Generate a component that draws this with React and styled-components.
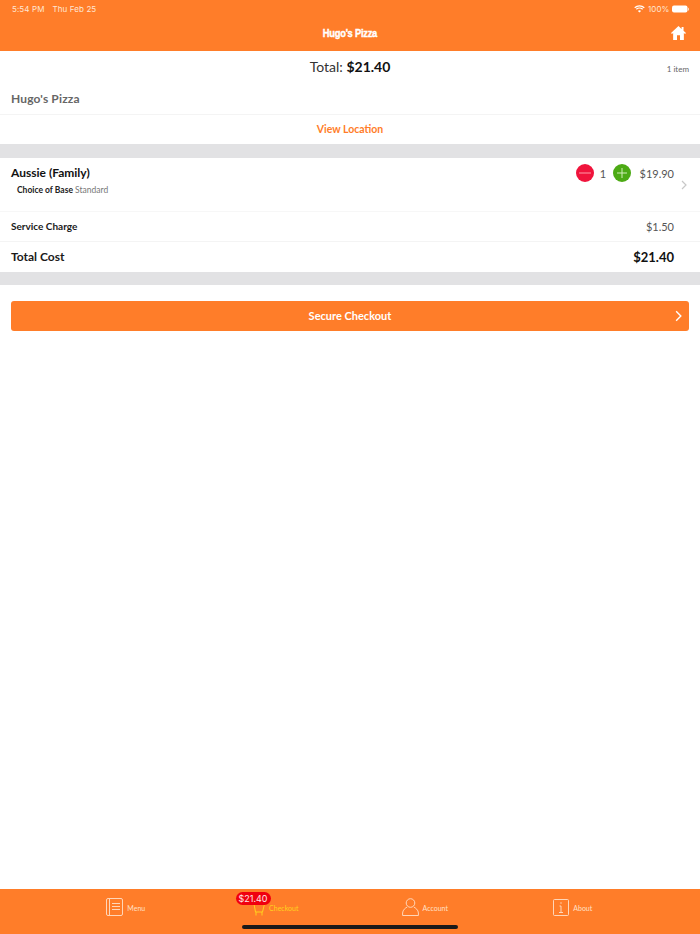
import React from 'react';
import styled, { createGlobalStyle } from 'styled-components';

const ORANGE = '#ff7d29';

const GlobalStyle = createGlobalStyle`
  html, body { margin: 0; padding: 0; background: #fff; }
  body { font-family: Lato, "Open Sans", sans-serif; }
`;

const Page = styled.div`
  width: 700px;
  height: 934px;
  display: flex;
  flex-direction: column;
  position: relative;
  overflow: hidden;
`;

const Header = styled.header`
  height: 51px;
  flex: none;
  background: ${ORANGE};
  color: #fff;
  display: flex;
  flex-direction: column;
`;

const StatusBar = styled.div`
  height: 17px;
  padding: 0 10px 0 12px;
  display: flex;
  align-items: center;
  justify-content: space-between;
  font-family: Inter, sans-serif;
  font-size: 8px;
  letter-spacing: 0.1px;
  color: #ffe6d3;
`;

const StatusGroup = styled.div`
  display: flex;
  align-items: center;
  gap: ${(p) => p.$gap || 3}px;
`;

const NavBar = styled.div`
  height: 34px;
  padding: 0 14px;
  display: grid;
  grid-template-columns: 40px 1fr 40px;
  align-items: center;
`;

const Brand = styled.div`
  grid-column: 2;
  justify-self: center;
  font-family: "Liberation Sans", sans-serif;
  font-size: 11px;
  font-weight: 700;
  letter-spacing: -0.3px;
  -webkit-text-stroke: 0.4px #fff;
  transform: scaleX(0.85);
  margin-top: -3px;
`;

const HomeButton = styled.div`
  justify-self: end;
  display: flex;
  margin-top: -3px;
`;

const TotalRow = styled.div`
  height: 33px;
  flex: none;
  padding: 0 11px 2px;
  box-sizing: border-box;
  display: grid;
  grid-template-columns: 1fr auto 1fr;
  align-items: center;
`;

const TotalText = styled.div`
  grid-column: 2;
  font-size: 14px;
  color: #333;
  strong { color: #111; font-weight: 700; }
`;

const ItemCount = styled.div`
  justify-self: end;
  font-size: 8px;
  color: #666;
  margin-top: 5px;
`;

const Row = styled.div`
  height: ${(p) => p.$h}px;
  flex: none;
  padding: 0 11px ${(p) => p.$pb || 0}px;
  display: flex;
  align-items: center;
  justify-content: ${(p) => (p.$center ? 'center' : 'space-between')};
  border-bottom: ${(p) => (p.$plain ? 'none' : '1px solid #f4f4f4')};
  box-sizing: border-box;
`;

const StoreName = styled.div`
  font-size: 12px;
  font-weight: 700;
  color: #666;
  letter-spacing: 0.15px;
`;

const LocationLink = styled.div`
  font-size: 10.5px;
  font-weight: 700;
  color: ${ORANGE};
`;

const GrayBand = styled.div`
  height: ${(p) => p.$h || 14}px;
  flex: none;
  background: #e2e2e4;
`;

const ItemRow = styled.div`
  height: 54px;
  flex: none;
  padding: 7px 26px 0 11px;
  box-sizing: border-box;
  border-bottom: 1px solid #f7f7f7;
  display: flex;
  justify-content: space-between;
  position: relative;
`;

const ItemName = styled.div`
  font-size: 12px;
  font-weight: 700;
  color: #111;
  line-height: 16px;
`;

const ItemOption = styled.div`
  font-size: 8.5px;
  color: #777;
  margin: 4px 0 0 6px;
  line-height: 11px;
  strong { color: #222; font-weight: 700; }
`;

const Stepper = styled.div`
  display: flex;
  align-items: center;
  height: 16px;
  font-size: 11px;
  color: #555;
`;

const RoundButton = styled.div`
  width: 18px;
  height: 18px;
  border-radius: 50%;
  background: ${(p) => p.$bg};
  display: flex;
  align-items: center;
  justify-content: center;
`;

const Qty = styled.span`
  width: 19px;
  text-align: center;
`;

const ItemPrice = styled.span`
  margin-left: 9px;
`;

const ItemChevron = styled.div`
  position: absolute;
  right: 13px;
  top: 22px;
  display: flex;
`;

const RowLabel = styled.div`
  font-size: ${(p) => (p.$big ? 12 : 10)}px;
  font-weight: 700;
  color: #1a1a1a;
  margin-top: ${(p) => (p.$big ? 0 : -2)}px;
`;

const RowValue = styled.div`
  font-size: ${(p) => (p.$big ? 13 : 11)}px;
  font-weight: ${(p) => (p.$big ? 700 : 400)};
  color: ${(p) => (p.$big ? '#111' : '#555')};
  margin-right: 15px;
`;

const CheckoutArea = styled.div`
  flex: 1;
  padding: 16px 11px 0;
`;

const CheckoutButton = styled.div`
  height: 30px;
  padding-bottom: 2px;
  box-sizing: border-box;
  border-radius: 3px;
  background: ${ORANGE};
  color: #fff;
  font-size: 11px;
  font-weight: 700;
  display: flex;
  align-items: center;
  justify-content: center;
  position: relative;
`;

const ButtonChevron = styled.div`
  position: absolute;
  right: 7px;
  top: 9px;
  display: flex;
`;

const TabBar = styled.nav`
  height: 45px;
  flex: none;
  background: ${ORANGE};
  display: flex;
  justify-content: center;
  align-items: flex-start;
  padding-top: 8px;
  box-sizing: border-box;
  position: relative;
`;

const Tab = styled.div`
  width: 149.5px;
  box-sizing: border-box;
  padding-right: ${(p) => p.$pr || 0}px;
  display: flex;
  align-items: center;
  justify-content: center;
  gap: 4px;
  height: 20px;
  font-size: 7px;
  color: ${(p) => (p.$active ? '#ffd21f' : '#ffe0c8')};
  position: relative;
`;

const TabLabel = styled.span`
  margin-top: 2px;
`;

const CartIcon = styled.svg`
  margin-top: 5px;
`;

const Badge = styled.div`
  position: absolute;
  left: 35px;
  top: -5px;
  height: 13px;
  padding: 0 3px;
  border-radius: 7px;
  background: #f0000f;
  color: #ffe6e6;
  font-family: Inter, sans-serif;
  font-size: 9px;
  line-height: 13px;
`;

const HomeIndicator = styled.div`
  position: absolute;
  left: 242px;
  bottom: 5px;
  width: 216px;
  height: 4px;
  border-radius: 2px;
  background: #1a1a1a;
`;

const Chevron = ({ color, w = 6, h = 10, sw = 1.2 }) => (
  <svg width={w} height={h} viewBox="0 0 6 10" fill="none">
    <path d="M1 1l4 4-4 4" stroke={color} strokeWidth={sw} />
  </svg>
);

const App = () => {
  return (
    <Page>
      <GlobalStyle />
      <Header>
        <StatusBar>
          <StatusGroup $gap={8}>
            <span>5:54 PM</span>
            <span>Thu Feb 25</span>
          </StatusGroup>
          <StatusGroup $gap={2.5}>
            <svg width="11" height="8" viewBox="0 0 11 8" fill="none" stroke="#fff" strokeWidth="1.2">
              <path d="M.7 2.7a7 7 0 0 1 9.6 0M2.3 4.3a4.7 4.7 0 0 1 6.4 0" />
              <path d="M5.500 7.600L3.900 5.900a2.300 2.300 0 0 1 3.200 0z" fill="#fff" stroke="none" />
            </svg>
            <span>100%</span>
            <svg width="18" height="8" viewBox="0 0 18 8">
              <rect x="0" y="0.5" width="15.5" height="7" rx="2" fill="#fff" />
              <rect x="16" y="2.8" width="1" height="2.6" rx=".5" fill="#ffd9bd" />
            </svg>
          </StatusGroup>
        </StatusBar>
        <NavBar>
          <Brand>Hugo's Pizza</Brand>
          <HomeButton>
            <svg width="15" height="14" viewBox="0 0 14 13" fill="#fff">
              <path d="M7 0L0 6.600l.9.9L2 6.500V13h3.600V8.600h2.800V13H12V6.500l1.100 1 .9-.9-2.300-2.200V1h-1.800v1.700z" />
            </svg>
          </HomeButton>
        </NavBar>
      </Header>

      <TotalRow>
        <TotalText>
          Total: <strong>$21.40</strong>
        </TotalText>
        <ItemCount>1 item</ItemCount>
      </TotalRow>
      <Row $h={31} $pb={2}>
        <StoreName>Hugo's Pizza</StoreName>
      </Row>
      <Row $h={29} $pb={2} $center $plain>
        <LocationLink>View Location</LocationLink>
      </Row>
      <GrayBand />

      <ItemRow>
        <div>
          <ItemName>Aussie (Family)</ItemName>
          <ItemOption>
            <strong>Choice of Base</strong> Standard
          </ItemOption>
        </div>
        <Stepper>
          <RoundButton $bg="#f0143c">
            <svg width="12" height="2" viewBox="0 0 12 2">
              <rect width="12" height="1" y=".5" fill="#ff9aa8" />
            </svg>
          </RoundButton>
          <Qty>1</Qty>
          <RoundButton $bg="#4caa14">
            <svg width="10" height="10" viewBox="0 0 10 10" fill="#cfeeb8">
              <rect y="4.5" width="10" height="1" />
              <rect x="4.5" width="1" height="10" />
            </svg>
          </RoundButton>
          <ItemPrice>$19.90</ItemPrice>
        </Stepper>
        <ItemChevron>
          <Chevron color="#c8c8c8" />
        </ItemChevron>
      </ItemRow>
      <Row $h={30}>
        <RowLabel>Service Charge</RowLabel>
        <RowValue>$1.50</RowValue>
      </Row>
      <Row $h={30} $pb={1} $plain>
        <RowLabel $big>Total Cost</RowLabel>
        <RowValue $big>$21.40</RowValue>
      </Row>
      <GrayBand $h={13} />

      <CheckoutArea>
        <CheckoutButton>
          Secure Checkout
          <ButtonChevron>
            <Chevron color="#fff" w={7} h={12} />
          </ButtonChevron>
        </CheckoutButton>
      </CheckoutArea>

      <TabBar>
        <Tab>
          <svg width="17" height="18" viewBox="0 0 17 18" fill="none" stroke="#ffe0c8" strokeWidth="0.9">
            <rect x=".5" y=".5" width="16" height="17" rx="1.5" />
            <path d="M3.500 1v16M6 5.500h8M6 8.500h8M6 11.500h8" />
          </svg>
          <TabLabel>Menu</TabLabel>
        </Tab>
        <Tab $active>
          <Badge>$21.40</Badge>
          <CartIcon width="13" height="13" viewBox="0 0 13 13" fill="none" stroke="#ffd21f" strokeWidth="1">
            <path d="M0 1h2l1.500 8h7L12.500 1H2" />
            <path d="M4 9v3.500M10 9v3.500" />
          </CartIcon>
          <TabLabel>Checkout</TabLabel>
        </Tab>
        <Tab>
          <svg width="17" height="18" viewBox="0 0 17 18" fill="none" stroke="#ffe0c8" strokeWidth="0.9">
            <circle cx="8.500" cy="5" r="4.300" />
            <path d="M.6 17.500v-2.500c0-3 3-5.200 4.600-6M16.400 17.500v-2.500c0-3-3-5.200-4.600-6M.6 17.500h15.800" />
          </svg>
          <TabLabel>Account</TabLabel>
        </Tab>
        <Tab $pr={3}>
          <svg width="16" height="17" viewBox="0 0 16 17" fill="none" stroke="#ffe0c8" strokeWidth="0.9">
            <rect x=".5" y=".5" width="15" height="16" rx="1" />
            <path d="M6.500 7h1.500v6.500M6 13.500h4M8 3.200v1.600" />
          </svg>
          <TabLabel>About</TabLabel>
        </Tab>
        <HomeIndicator />
      </TabBar>
    </Page>
  );
};

export default App;
